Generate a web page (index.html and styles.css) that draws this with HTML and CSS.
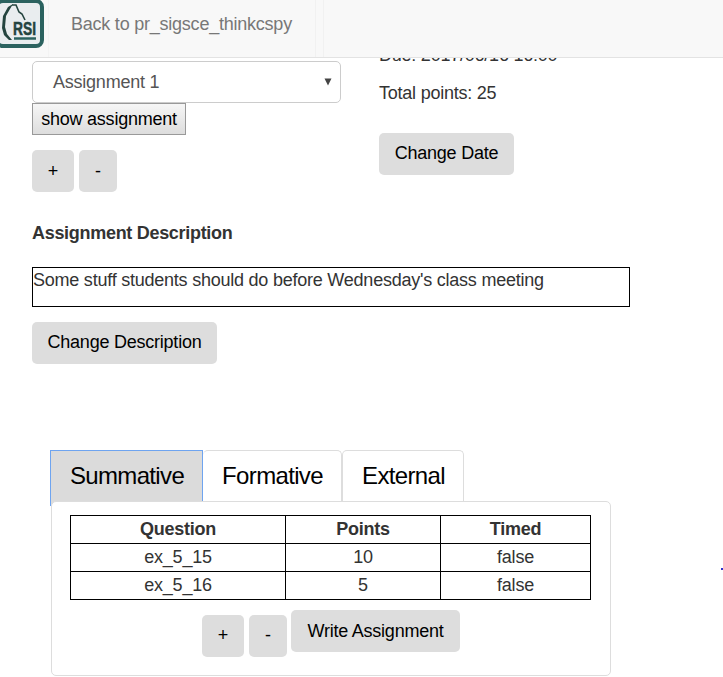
FILE: index.html
```html
<!DOCTYPE html>
<html lang="en">
<head>
<meta charset="utf-8">
<title>Assignments</title>
<link rel="stylesheet" href="styles.css">
</head>
<body>
<nav class="navbar">
  <a class="brand" href="#">
    <svg width="45" height="49" viewBox="0 0 45 49">
      <rect x="-3" y="1" width="45" height="45" rx="6" fill="#e9edef" stroke="#2b625f" stroke-width="4"/>
      <path d="M13 4 8 7 3 16 2 28 4 35 9 40 12 40 7 34 5 27 6 16 10 9Z" fill="#24443f"/>
      <path d="M12 5 16 5 19 12 22 14 25 20" fill="none" stroke="#24443f" stroke-width="1.600"/>
      <text class="logo-text" x="13" y="35" textLength="23" lengthAdjust="spacingAndGlyphs">RSI</text>
      <path d="M14 38.500H36" stroke="#2b625f" stroke-width="2.500"/>
    </svg>
  </a>
  <a class="back" href="#">Back to pr_sigsce_thinkcspy</a>
  <span class="divider"></span>
</nav>
<main class="page">
  <div class="top">
    <section class="chooser">
      <div class="select"><span>Assignment 1</span><svg width="8" height="8" viewBox="0 0 8 8"><path d="M0.500 0.500H7.500L4 7.500Z" fill="#444"/></svg></div>
      <button class="native">show assignment</button>
      <div class="pair"><button class="btn plus">+</button><button class="btn minus">-</button></div>
    </section>
    <section class="details">
      <p class="due">Due: 2017/06/16 16:00</p>
      <p class="points">Total points: 25</p>
      <button class="btn date">Change Date</button>
    </section>
  </div>
  <h4>Assignment Description</h4>
  <div class="description">Some stuff students should do before Wednesday's class meeting</div>
  <button class="btn change">Change Description</button>
  <section class="questions">
    <div class="tabs">
      <a class="tab active">Summative</a><a class="tab formative">Formative</a><a class="tab external">External</a>
    </div>
    <div class="panel">
      <table>
        <tr><th class="question">Question</th><th class="score">Points</th><th>Timed</th></tr>
        <tr><td>ex_5_15</td><td>10</td><td>false</td></tr>
        <tr><td>ex_5_16</td><td>5</td><td>false</td></tr>
      </table>
      <div class="actions"><div class="pair"><button class="btn plus">+</button><button class="btn minus">-</button></div><button class="btn write">Write Assignment</button></div>
    </div>
  </section>
</main>
<i class="dot"></i>
</body>
</html>
```
FILE: styles.css
```css
* { box-sizing: border-box; }
body { margin: 0; height: 677px; overflow: hidden; background: #fff; color: #333; font: 18px/24px "Liberation Sans", Arial, sans-serif; letter-spacing: -0.23px; }
button { font: inherit; letter-spacing: inherit; color: #000; }
a { color: inherit; text-decoration: none; }
p, h4 { margin: 0; }
.navbar { position: fixed; inset: 0 0 auto; z-index: 2; height: 58px; display: flex; background: #f8f8f8; border-bottom: 1px solid #e3e3e3; }
.brand { width: 49px; border-right: 1px solid #f3f3f3; }
.brand svg { display: block; }
.logo-text { font: bold 19px "Liberation Sans", sans-serif; letter-spacing: 0; fill: #24443f; stroke: #24443f; stroke-width: 0.5px; }
.back { width: 267px; padding: 12px 0 0 22px; border-right: 1px solid #f1f1f1; color: #777; white-space: nowrap; }
.divider { width: 8px; border-right: 1px solid #f1f1f1; }
.page { padding: 42px 0 0 32px; }
.top { display: flex; height: 150px; }
.chooser { width: 347px; padding-top: 19px; }
.select { width: 309px; height: 42px; padding: 0 8px 0 20px; display: flex; align-items: center; justify-content: space-between; border: 1px solid #ccc; border-radius: 5px; color: #555; }
.native { display: block; width: 154px; height: 32px; padding: 0; border: 1px solid #999; background: linear-gradient(#f6f6f6, #ddd); white-space: nowrap; }
.pair { display: flex; gap: 5px; }
.chooser .pair { margin-top: 15px; }
.btn { display: block; height: 42px; padding: 0 0 2px; border: 0; border-radius: 5px; background: #ddd; white-space: nowrap; }
.btn.plus { width: 42px; padding: 0; }
.btn.minus { width: 38px; padding: 0; }
.details { padding-top: 1px; }
.points { margin-top: 14px; }
.date { width: 135px; margin-top: 28px; }
h4 { margin-top: 29px; font-size: 18px; line-height: 24px; letter-spacing: -0.3px; }
.description { width: 598px; height: 40px; margin: 22px 0 15px; border: 1px solid #000; white-space: nowrap; }
.change { width: 185px; }
.questions { width: 560px; margin: 86px 0 0 19px; }
.tabs { display: flex; height: 51px; font-size: 24px; line-height: 50px; letter-spacing: -0.65px; color: #000; text-align: center; }
.tab { padding-left: 1px; border: 1px solid #ddd; border-bottom: 0; border-radius: 5px 5px 0 0; height: 51px; }
.tab.active { width: 153px; height: 56px; margin-left: -1px; background: #dbdbdb; border-color: #6ea4f0; border-radius: 0; }
.formative { width: 139px; border-left: 0; }
.external { width: 122px; }
.panel { position: relative; height: 175px; padding: 13px 20px 0 18px; background: #fff; border: 1px solid #ddd; border-radius: 5px; }
table { width: 521px; border-collapse: collapse; table-layout: fixed; text-align: center; }
th, td { height: 28px; padding: 0 0 2px; border: 1px solid #000; line-height: 24px; }
.question { width: 215px; }
.score { width: 155px; }
.actions { display: flex; justify-content: center; gap: 4px; margin-top: 10px; padding-left: 2px; }
.actions .pair { margin-top: 5px; }
.actions .plus, .actions .minus { padding-bottom: 2px; }
.write { width: 169px; padding-bottom: 0; }
.dot { position: fixed; right: 0; top: 568px; width: 2px; height: 2px; background: #33c; }
```
